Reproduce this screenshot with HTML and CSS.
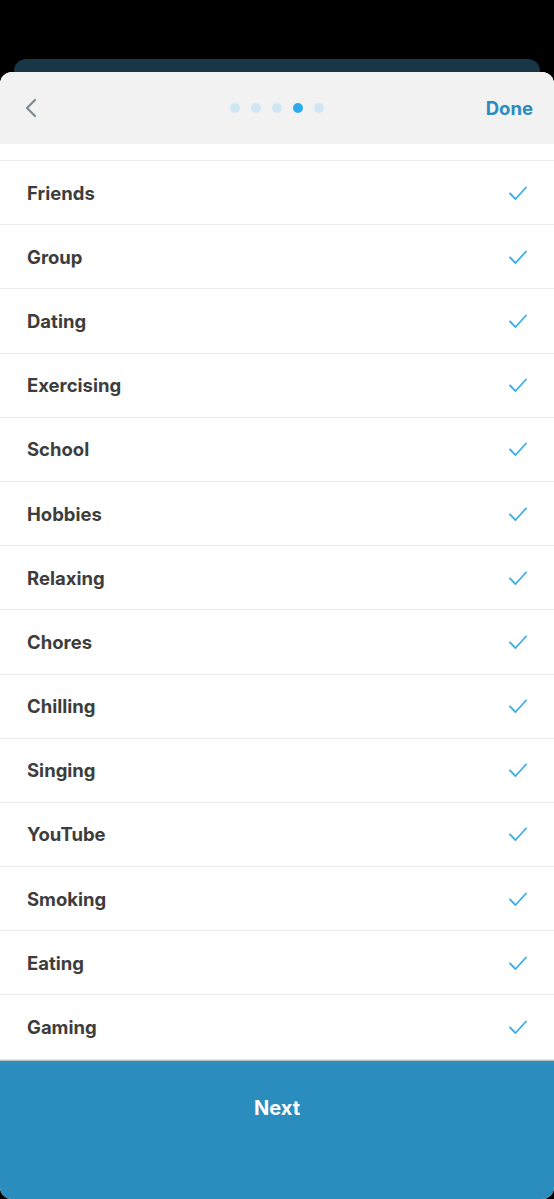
FILE: index.html
```html
<!DOCTYPE html>
<html lang="en">
<head>
  <meta charset="UTF-8">
  <meta name="viewport" content="width=device-width, initial-scale=1.0">
  <title>Activities</title>
  <link rel="stylesheet" href="styles.css">
</head>
<body>
  <div class="screen">
    <div class="backdrop-card"></div>
    <div class="sheet">
      <div class="header">
        <button class="back-btn" aria-label="Back">
          <svg width="14" height="20" viewBox="0 0 14 20"><path d="M11 2 L3 10 L11 18" fill="none" stroke="#7b8a90" stroke-width="2.2" stroke-linecap="round" stroke-linejoin="round"/></svg>
        </button>
        <div class="dots">
          <span class="dot"></span>
          <span class="dot"></span>
          <span class="dot"></span>
          <span class="dot active"></span>
          <span class="dot"></span>
        </div>
        <button class="done-btn">Done</button>
      </div>
      <div class="list">
        <div class="item"><span>Friends</span><svg class="check" viewBox="0 0 20 16"><path d="M2 8.5 L7.5 14 L18 2.5"/></svg></div>
        <div class="item"><span>Group</span><svg class="check" viewBox="0 0 20 16"><path d="M2 8.5 L7.5 14 L18 2.5"/></svg></div>
        <div class="item"><span>Dating</span><svg class="check" viewBox="0 0 20 16"><path d="M2 8.5 L7.5 14 L18 2.5"/></svg></div>
        <div class="item"><span>Exercising</span><svg class="check" viewBox="0 0 20 16"><path d="M2 8.5 L7.5 14 L18 2.5"/></svg></div>
        <div class="item"><span>School</span><svg class="check" viewBox="0 0 20 16"><path d="M2 8.5 L7.5 14 L18 2.5"/></svg></div>
        <div class="item"><span>Hobbies</span><svg class="check" viewBox="0 0 20 16"><path d="M2 8.5 L7.5 14 L18 2.5"/></svg></div>
        <div class="item"><span>Relaxing</span><svg class="check" viewBox="0 0 20 16"><path d="M2 8.5 L7.5 14 L18 2.5"/></svg></div>
        <div class="item"><span>Chores</span><svg class="check" viewBox="0 0 20 16"><path d="M2 8.5 L7.5 14 L18 2.5"/></svg></div>
        <div class="item"><span>Chilling</span><svg class="check" viewBox="0 0 20 16"><path d="M2 8.5 L7.5 14 L18 2.5"/></svg></div>
        <div class="item"><span>Singing</span><svg class="check" viewBox="0 0 20 16"><path d="M2 8.5 L7.5 14 L18 2.5"/></svg></div>
        <div class="item"><span>YouTube</span><svg class="check" viewBox="0 0 20 16"><path d="M2 8.5 L7.5 14 L18 2.5"/></svg></div>
        <div class="item"><span>Smoking</span><svg class="check" viewBox="0 0 20 16"><path d="M2 8.5 L7.5 14 L18 2.5"/></svg></div>
        <div class="item"><span>Eating</span><svg class="check" viewBox="0 0 20 16"><path d="M2 8.5 L7.5 14 L18 2.5"/></svg></div>
        <div class="item"><span>Gaming</span><svg class="check" viewBox="0 0 20 16"><path d="M2 8.5 L7.5 14 L18 2.5"/></svg></div>
      </div>
      <button class="next-btn">Next</button>
    </div>
  </div>
</body>
</html>
```

FILE: styles.css
```css
html, body {
  margin: 0;
  padding: 0;
  background-color: #000;
}
body {
  font-family: Inter, "Noto Sans", Arial, sans-serif;
}
.screen {
  height: 100vh;
  display: flex;
  flex-direction: column;
  padding-top: 59px;
  box-sizing: border-box;
}
.backdrop-card {
  height: 13px;
  margin: 0 14px;
  background-color: #183645;
  border-radius: 12px 12px 0 0;
}
.sheet {
  flex: 1;
  display: flex;
  flex-direction: column;
  background-color: #fff;
  border-radius: 12px;
  overflow: hidden;
}
.header {
  height: 72px;
  flex-shrink: 0;
  background-color: #f2f2f2;
  display: flex;
  align-items: center;
  justify-content: space-between;
  padding: 0 21px 0 24px;
  position: relative;
}
.back-btn {
  background: none;
  border: none;
  padding: 0;
  display: flex;
  cursor: pointer;
}
.dots {
  position: absolute;
  left: 50%;
  top: 50%;
  transform: translate(-50%, -50%);
  display: flex;
  gap: 11px;
}
.dot {
  width: 10px;
  height: 10px;
  border-radius: 50%;
  background-color: #cfe7f4;
}
.dot.active {
  background-color: #2daaf0;
}
.done-btn {
  background: none;
  border: none;
  padding: 0;
  font-family: inherit;
  font-size: 18.5px;
  font-weight: 700;
  color: #2a8bbf;
  cursor: pointer;
}
.list {
  padding-top: 16px;
  background-color: #fff;
  flex-shrink: 0;
}
.item {
  height: 64.2px;
  box-sizing: border-box;
  border-top: 1px solid #ececec;
  display: flex;
  align-items: center;
  justify-content: space-between;
  padding: 0 26px 0 27px;
  font-size: 18.5px;
  font-weight: 700;
  color: #3d3d3d;
}
.check {
  width: 20px;
  height: 16px;
  fill: none;
  stroke: #39aeea;
  stroke-width: 1.8;
  stroke-linecap: round;
  stroke-linejoin: round;
}
.next-btn {
  flex: 1;
  border: none;
  border-top: 1px solid #e6e6e6;
  box-shadow: inset 0 1px 0 #b9c3c8;
  background-color: #2a8dbe;
  color: #fff;
  font-family: inherit;
  font-size: 20px;
  font-weight: 700;
  display: flex;
  justify-content: center;
  align-items: flex-start;
  padding-top: 36px;
  cursor: pointer;
}
```
